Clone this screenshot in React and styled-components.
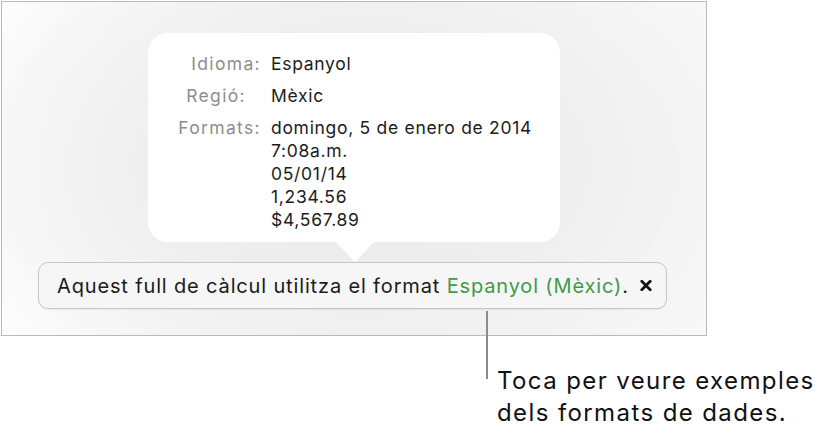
import React from "react";
import styled, { createGlobalStyle } from "styled-components";

const Global = createGlobalStyle`
  html, body { margin: 0; padding: 0; background: #ffffff; }
  body { font-family: Inter, "Liberation Sans", Arial, sans-serif; -webkit-font-smoothing: antialiased; }
  #root { width: 827px; height: 439px; }
`;

const Stage = styled.div`
  position: relative;
  width: 827px;
  height: 439px;
`;

const Frame = styled.div`
  box-sizing: border-box;
  width: 706px;
  height: 335px;
  margin: 1px 0 0 1px;
  border: 1px solid #b9b9b9;
  background:
    radial-gradient(ellipse 430px 270px at 354px 165px, #eaeaea 0%, #eeeeee 45%, rgba(248,248,248,0) 100%),
    linear-gradient(90deg, #fcfcfc 0%, #f6f6f6 50%, #f8f8f8 100%);
  display: flex;
  flex-direction: column;
  align-items: flex-start;
  padding-top: 31px;
`;

const Popover = styled.div`
  position: relative;
  box-sizing: border-box;
  width: 412px;
  margin-left: 146px;
  background: #ffffff;
  border-radius: 20px;
  padding: 18.5px 20px 11.5px 26px;
  display: grid;
  grid-template-columns: 86px 1fr;
  column-gap: 11px;
  row-gap: 9px;
  font-size: 17.5px;
  line-height: 23px;
  letter-spacing: 0.7px;
  &::after {
    content: "";
    position: absolute;
    left: 188px;
    bottom: -20px;
    width: 0;
    height: 0;
    border-left: 19px solid transparent;
    border-right: 19px solid transparent;
    border-top: 20px solid #ffffff;
  }
`;

const Label = styled.div`
  color: #8d8d8d;
  text-align: right;
  white-space: nowrap;
  letter-spacing: 1.35px;
  margin-right: -1px;
  padding-right: ${p => p.$inset || 0}px;
`;

const Value = styled.div`
  color: #1c1c1c;
  white-space: nowrap;
`;

const Banner = styled.div`
  box-sizing: border-box;
  margin-top: 20px;
  margin-left: 36px;
  width: 629px;
  height: 47px;
  border: 1px solid #c6c6c6;
  border-radius: 10px;
  background: #f6f6f6;
  box-shadow: 0 1px 1px rgba(0,0,0,0.06);
  display: flex;
  align-items: center;
  padding-left: 18px;
  font-size: 20px;
  letter-spacing: 0.85px;
  color: #1a1a1a;
  white-space: nowrap;
`;

const Green = styled.span`
  color: #3f9a4c;
`;

const Close = styled.svg`
  margin-left: 11px;
  flex: none;
`;

const Leader = styled.div`
  position: absolute;
  left: 486px;
  top: 310px;
  width: 2px;
  height: 68px;
  background: #8c8c8c;
`;

const Caption = styled.div`
  margin: 29px 0 0 497px;
  font-size: 24px;
  line-height: 32px;
  letter-spacing: 1.4px;
  color: #111111;
  white-space: nowrap;
`;

export default function App() {
  return (
    <Stage>
      <Global />
      <Frame>
        <Popover>
          <Label>Idioma:</Label>
          <Value>Espanyol</Value>
          <Label $inset={15}>Regió:</Label>
          <Value>Mèxic</Value>
          <Label>Formats:</Label>
          <Value>
            domingo, 5 de enero de 2014
            <br />7:08a.m.
            <br />05/01/14
            <br />1,234.56
            <br />$4,567.89
          </Value>
        </Popover>
        <Banner>
          <span>
            Aquest full de càlcul utilitza el format <Green>Espanyol (Mèxic)</Green>.
          </span>
          <Close width="12" height="11" viewBox="0 0 12 11" aria-hidden="true">
            <path d="M1.8 1.3 L10.2 9.7 M10.2 1.3 L1.8 9.7" stroke="#111" strokeWidth="2.8" strokeLinecap="round" />
          </Close>
        </Banner>
      </Frame>
      <Leader />
      <Caption>
        Toca per veure exemples
        <br />
        dels formats de dades.
      </Caption>
    </Stage>
  );
}
